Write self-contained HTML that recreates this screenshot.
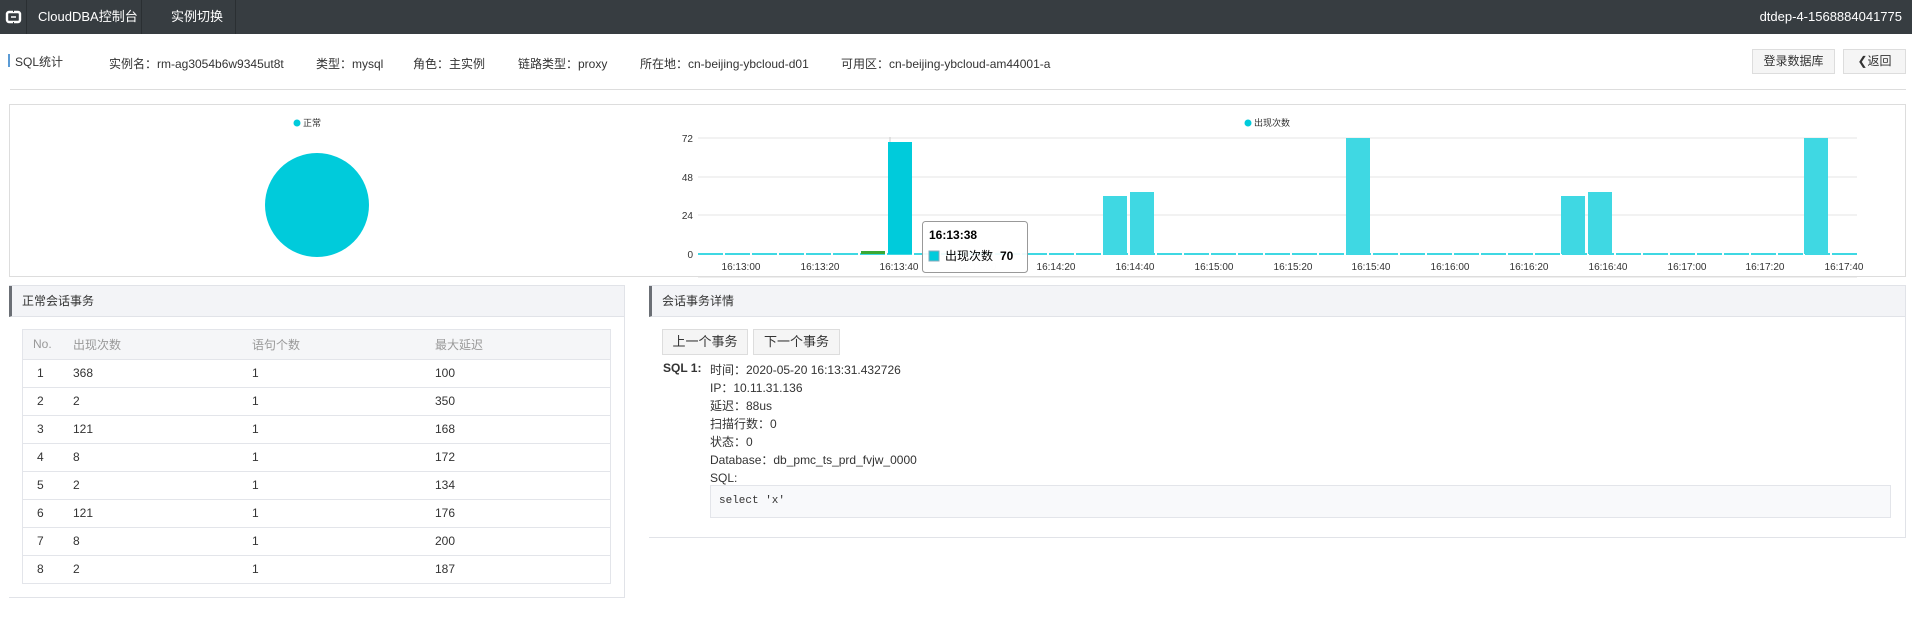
<!DOCTYPE html>
<html><head><meta charset="utf-8"><style>
*{box-sizing:border-box;margin:0;padding:0}
body{width:1912px;height:628px;background:#fff;font-family:"Liberation Sans","Noto Sans CJK SC",sans-serif;font-size:12px;color:#333;position:relative;overflow:hidden}
.a{position:absolute}
.top{left:0;top:0;width:1912px;height:34px;background:#373d41;color:#fff;font-size:13px}
.top div{position:absolute;top:0;height:34px;line-height:34px}
.sep{width:1px;background:#2a2f32}
.btn{position:absolute;border:1px solid #ddd;background:#f5f5f5;text-align:center;color:#333;font-size:12px}
.ph{background:#f3f4f7;border-bottom:1px solid #e1e3e8;border-left:3px solid #6b6f75;height:31px;line-height:30px;padding-left:10px;font-size:12px;color:#333}
table{border-collapse:collapse;width:100%}
td{height:28px;border-top:1px solid #e3e5ea;font-size:12px;color:#333}
th{height:29px;text-align:left;font-weight:normal;color:#999;background:#f5f6f8}
</style></head><body>
<div class="a top">
 <div style="left:5px;width:17px"><svg width="17" height="34"><rect x="2" y="12" width="13" height="10" rx="2" fill="none" stroke="#fff" stroke-width="2.4"/><line x1="6" y1="17" x2="11" y2="17" stroke="#fff" stroke-width="1.5"/><line x1="8" y1="10" x2="9" y2="10" stroke="#373d41" stroke-width="4"/><line x1="8" y1="24" x2="9" y2="24" stroke="#373d41" stroke-width="4"/></svg></div>
 <div class="sep" style="left:26px"></div>
 <div style="left:38px">CloudDBA控制台</div>
 <div class="sep" style="left:141px"></div>
 <div style="left:171px">实例切换</div>
 <div class="sep" style="left:235px"></div>
 <div style="right:10px">dtdep-4-1568884041775</div>
</div>
<div class="a" style="left:8px;top:54px;width:2px;height:13px;background:#5b9bd5"></div>
<div class="a" style="left:15px;top:53px">SQL统计</div>
<div class="a" style="left:109px;top:55px;white-space:pre;word-spacing:0">实例名：rm-ag3054b6w9345ut8t</div>
<div class="a" style="left:316px;top:55px">类型：mysql</div>
<div class="a" style="left:413px;top:55px">角色：主实例</div>
<div class="a" style="left:518px;top:55px">链路类型：proxy</div>
<div class="a" style="left:640px;top:55px">所在地：cn-beijing-ybcloud-d01</div>
<div class="a" style="left:841px;top:55px">可用区：cn-beijing-ybcloud-am44001-a</div>
<div class="btn" style="left:1752px;top:49px;width:83px;height:25px;line-height:23px">登录数据库</div>
<div class="btn" style="left:1843px;top:49px;width:63px;height:25px;line-height:23px">❮返回</div>
<div class="a" style="left:10px;top:89px;width:1896px;height:1px;background:#ddd"></div>

<div class="a" style="left:9px;top:104px;width:1897px;height:173px;border:1px solid #ddd"></div>
<svg class="a" style="left:0;top:0" width="1912" height="285">
 <circle cx="297" cy="123" r="3.5" fill="#00cbdb"/><text x="303" y="126" font-size="9" fill="#333">正常</text>
 <circle cx="317" cy="205" r="52" fill="#00cbdb"/>
 <circle cx="1248" cy="123" r="3.5" fill="#00cbdb"/><text x="1254" y="126" font-size="9" fill="#333">出现次数</text>
 <g stroke="#e6e6e6"><line x1="698" y1="138" x2="1857" y2="138"/><line x1="698" y1="177" x2="1857" y2="177"/><line x1="698" y1="215" x2="1857" y2="215"/></g>
 <g font-size="10" fill="#333" text-anchor="end"><text x="693" y="142">72</text><text x="693" y="181">48</text><text x="693" y="219">24</text><text x="693" y="258">0</text></g>
 <line x1="698" y1="254" x2="1857" y2="254" stroke="#3fd8e3" stroke-width="2" stroke-dasharray="25 2"/>
 <rect x="861" y="251" width="24" height="3" fill="#3aa935"/>
 <line x1="890" y1="137" x2="890" y2="254" stroke="#ccc"/>
 <rect x="888" y="142" width="24" height="112" fill="#00cbdb"/>
 <g fill="#3fd8e3">
  <rect x="1103" y="196" width="24" height="58"/><rect x="1130" y="192" width="24" height="62"/>
  <rect x="1346" y="138" width="24" height="116"/>
  <rect x="1561" y="196" width="24" height="58"/><rect x="1588" y="192" width="24" height="62"/>
  <rect x="1804" y="138" width="24" height="116"/>
 </g>
 <line x1="698" y1="277" x2="1857" y2="277" stroke="#ddd"/>
 <g font-size="10" fill="#333" text-anchor="middle">
  <text x="741" y="270">16:13:00</text><text x="820" y="270">16:13:20</text><text x="899" y="270">16:13:40</text><text x="977" y="270" fill="#ddd">16:14:00</text><text x="1056" y="270">16:14:20</text><text x="1135" y="270">16:14:40</text><text x="1214" y="270">16:15:00</text><text x="1293" y="270">16:15:20</text><text x="1371" y="270">16:15:40</text><text x="1450" y="270">16:16:00</text><text x="1529" y="270">16:16:20</text><text x="1608" y="270">16:16:40</text><text x="1687" y="270">16:17:00</text><text x="1765" y="270">16:17:20</text><text x="1844" y="270">16:17:40</text>
 </g>
 <rect x="922.5" y="221.5" width="105" height="51" rx="3" fill="#fff" fill-opacity="0.92" stroke="#999"/>
 <text x="929" y="239" font-size="12" font-weight="bold" fill="#000">16:13:38</text>
 <rect x="929" y="251" width="10" height="10" fill="#00cbdb" stroke="#8ab"/>
 <text x="945" y="260" font-size="12" fill="#000">出现次数</text><text x="1000" y="260" font-size="12" font-weight="bold" fill="#000">70</text>
</svg>

<div class="a" style="left:9px;top:285px;width:616px;height:313px;border:1px solid #e1e3e8;border-left:none">
 <div class="ph">正常会话事务</div>
 <div style="position:absolute;left:13px;top:43px;width:589px;border:1px solid #e3e5ea">
 <table>
  <tr><th style="width:50px;padding-left:10px">No.</th><th style="width:179px">出现次数</th><th style="width:183px">语句个数</th><th>最大延迟</th></tr>
  <tr><td style="padding-left:14px">1</td><td>368</td><td>1</td><td>100</td></tr>
  <tr><td style="padding-left:14px">2</td><td>2</td><td>1</td><td>350</td></tr>
  <tr><td style="padding-left:14px">3</td><td>121</td><td>1</td><td>168</td></tr>
  <tr><td style="padding-left:14px">4</td><td>8</td><td>1</td><td>172</td></tr>
  <tr><td style="padding-left:14px">5</td><td>2</td><td>1</td><td>134</td></tr>
  <tr><td style="padding-left:14px">6</td><td>121</td><td>1</td><td>176</td></tr>
  <tr><td style="padding-left:14px">7</td><td>8</td><td>1</td><td>200</td></tr>
  <tr><td style="padding-left:14px">8</td><td>2</td><td>1</td><td>187</td></tr>
 </table></div>
</div>

<div class="a" style="left:649px;top:285px;width:1257px;height:253px;border:1px solid #e1e3e8;border-left:none">
 <div class="ph">会话事务详情</div>
</div>
<div class="btn" style="left:662px;top:329px;width:86px;height:26px;line-height:24px;font-size:13px">上一个事务</div>
<div class="btn" style="left:753px;top:329px;width:87px;height:26px;line-height:24px;font-size:13px">下一个事务</div>
<div class="a" style="left:663px;top:361px;font-weight:bold;font-size:12px">SQL 1:</div>
<div class="a" style="left:710px;top:361px;font-size:12px;line-height:18px">时间：2020-05-20 16:13:31.432726<br>IP：10.11.31.136<br>延迟：88us<br>扫描行数：0<br>状态：0<br>Database：db_pmc_ts_prd_fvjw_0000<br>SQL:</div>
<div class="a" style="left:710px;top:485px;width:1181px;height:33px;background:#f8f9fb;border:1px solid #e3e5ea;font-family:'Liberation Mono',monospace;font-size:11px;line-height:31px;padding-left:8px">select 'x'</div>
</body></html>
